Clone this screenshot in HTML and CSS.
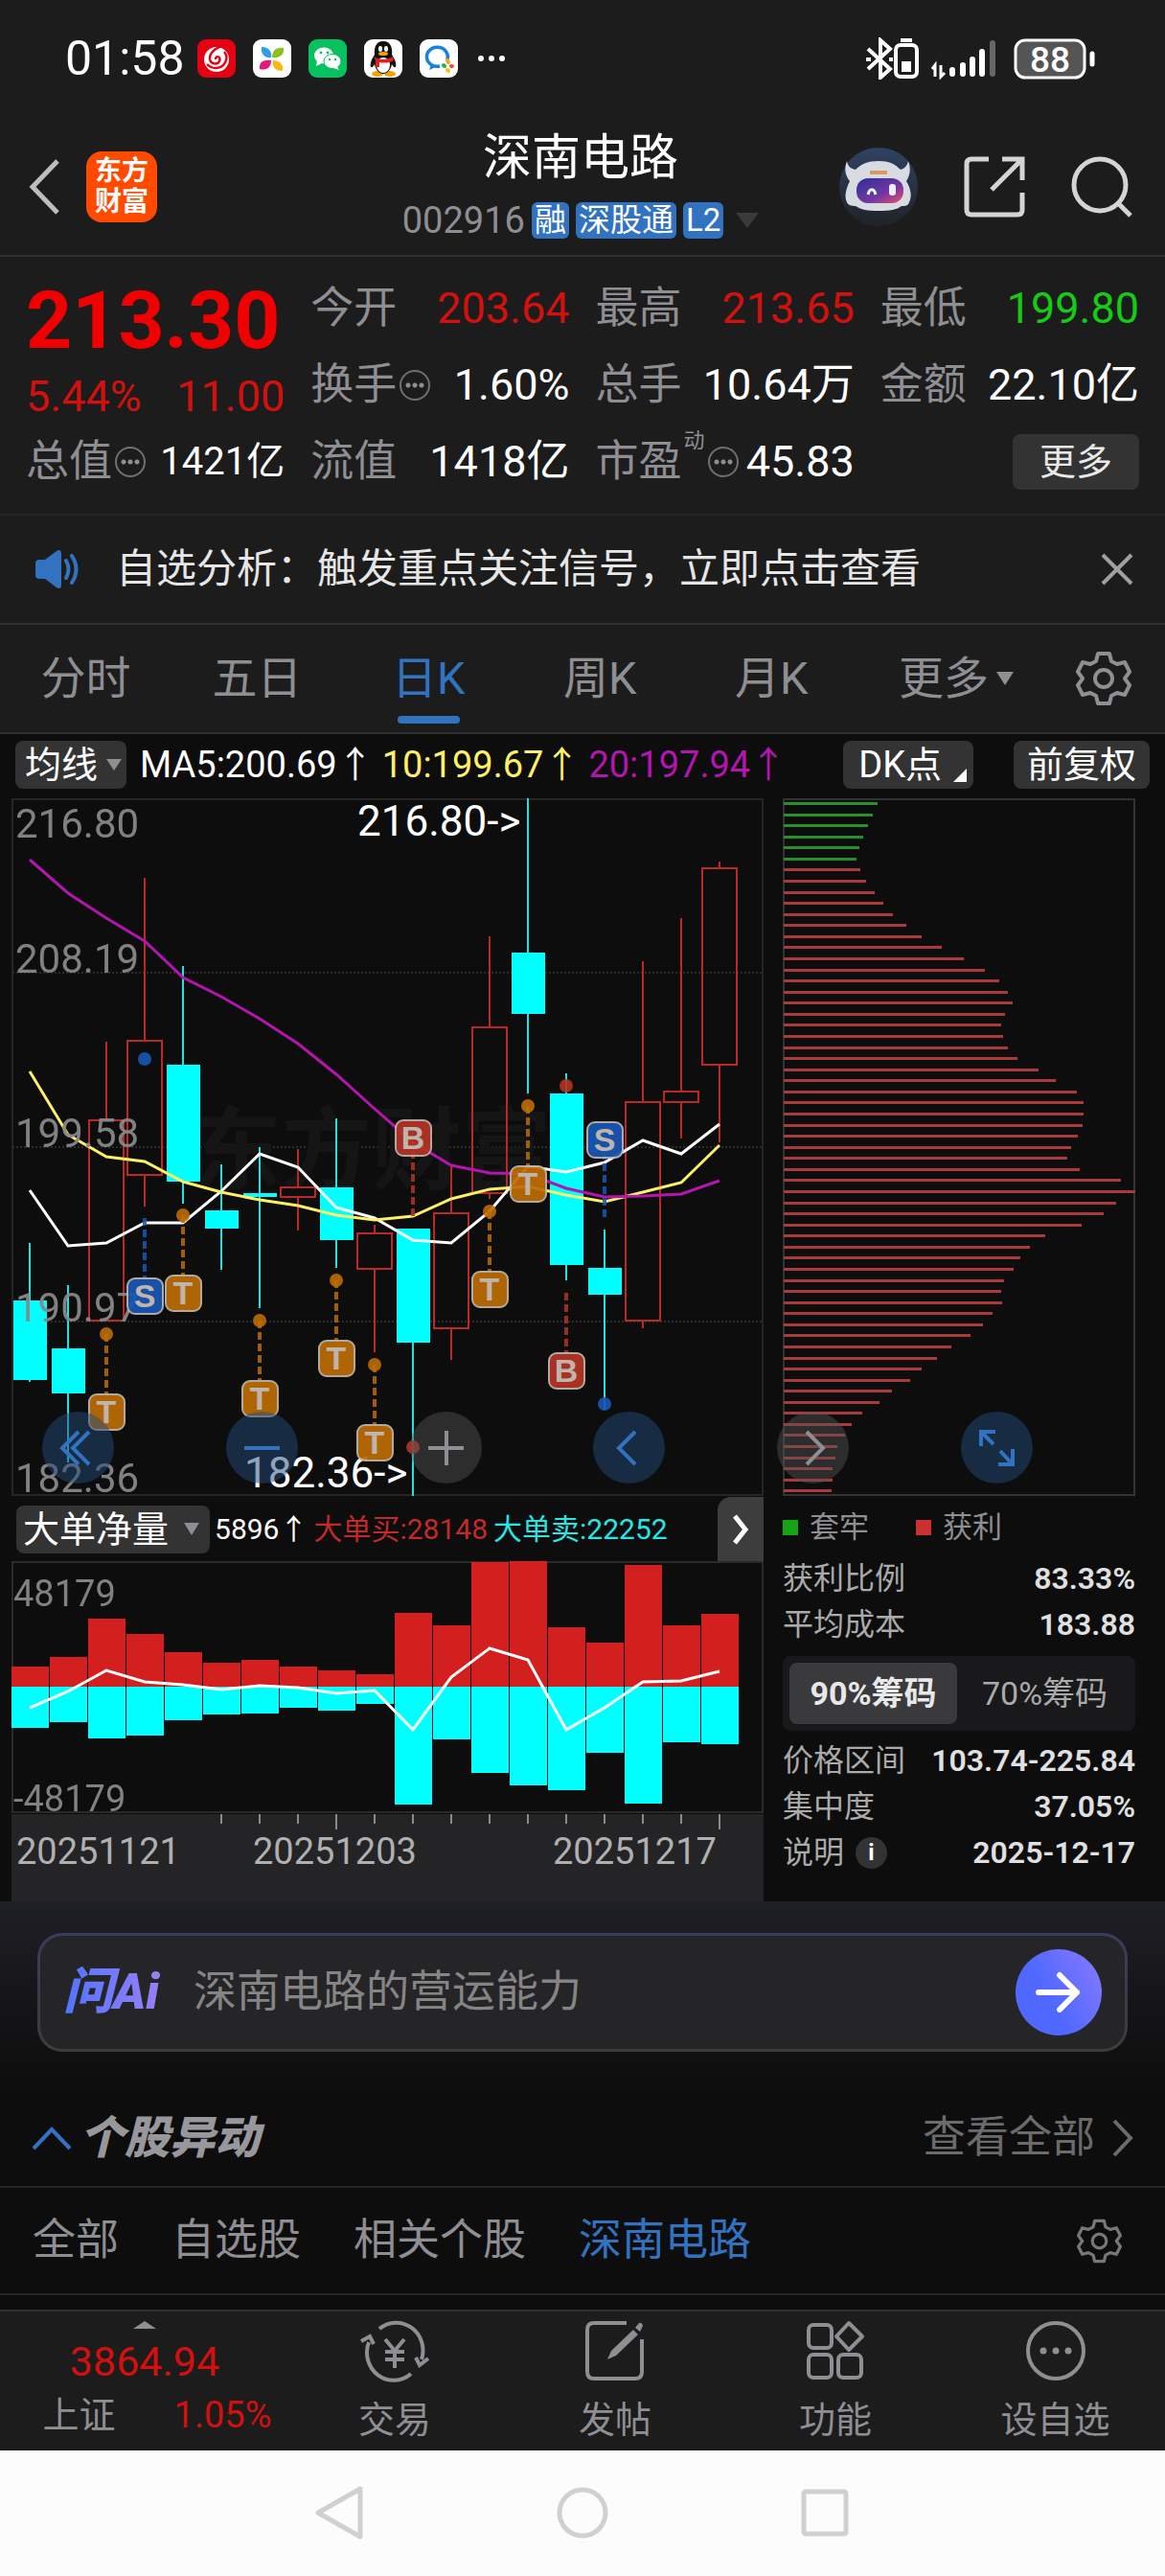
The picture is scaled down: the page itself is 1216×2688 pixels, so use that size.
FILE: index.html
```html
<!DOCTYPE html>
<html lang="zh-CN">
<head>
<meta charset="utf-8">
<meta name="viewport" content="width=device-width, initial-scale=1">
<title>深南电路 002916</title>
<link rel="stylesheet" href="styles.css">
</head>
<body>
<div class="status">
  <span class="clock">01:58</span>
  <div class="apps">
    <svg viewBox="0 0 40 40"><rect width="40" height="40" rx="9" fill="#e60012"/><circle cx="20" cy="21" r="13" fill="#fff"/><path d="M31 5C20 8 12 14 13 21c1 5 8 6 10 2 2-5-4-7-4-2M28 13c6 7 0 17-9 17-4 0-7-2-9-4" fill="none" stroke="#e60012" stroke-width="2.4"/></svg>
    <svg viewBox="0 0 40 40"><rect width="40" height="40" rx="9" fill="#fff"/><path d="M9 8c7 0 11 4 10 11C12 20 8 15 9 8z" fill="#2b9fe0"/><path d="M32 9c-8-1-12 3-12 10 8 1 13-3 12-10z" fill="#8cc21f"/><path d="M7 31c8 2 12-2 12-9-8-1-13 2-12 9z" fill="#e3197b"/><path d="M31 33c-8 0-11-4-10-11 7 0 11 4 10 11z" fill="#f9b90f"/></svg>
    <svg viewBox="0 0 40 40"><rect width="40" height="40" rx="9" fill="#07c160"/><ellipse cx="16" cy="17" rx="10" ry="8.500" fill="#fff"/><path d="M9 22l-1 6 6-3z" fill="#fff"/><ellipse cx="25" cy="23" rx="9" ry="7.500" fill="#fff" stroke="#07c160"/><path d="M30 28l2 4-6-2z" fill="#fff"/><g fill="#07c160"><circle cx="13" cy="14" r="1.400"/><circle cx="20" cy="14" r="1.400"/><circle cx="22" cy="21" r="1.200"/><circle cx="28" cy="21" r="1.200"/></g></svg>
    <svg viewBox="0 0 40 40"><rect width="40" height="40" rx="9" fill="#fff"/><ellipse cx="14" cy="36" rx="6" ry="3" fill="#f5a300"/><ellipse cx="27" cy="36" rx="6" ry="3" fill="#f5a300"/><path d="M20 2c-7 0-10 6-9 14-4 6-5 10-4 13 1 1 3-1 4-3 1 6 5 10 9 10s8-4 9-10c1 2 3 4 4 3 1-3 0-7-4-13 1-8-2-14-9-14z" fill="#111"/><ellipse cx="20" cy="27" rx="7" ry="8" fill="#fff"/><ellipse cx="17" cy="10" rx="2" ry="3" fill="#fff"/><ellipse cx="23" cy="10" rx="2" ry="3" fill="#fff"/><ellipse cx="20" cy="15" rx="5" ry="2" fill="#f5a300"/><path d="M10 18c6 4 14 4 20 0l1 4c-5 3-10 3-15 2v5h-4v-7z" fill="#e02020"/></svg>
    <svg viewBox="0 0 40 40"><rect width="40" height="40" rx="9" fill="#fff"/><path d="M29 21a11 10 0 1 0-8 7" fill="none" stroke="#1683e0" stroke-width="3.500"/><path d="M12 26l-2 6 7-3z" fill="#1683e0"/><g stroke-width="4" stroke-linecap="round"><path d="M29 22l1 2" stroke="#f6a21a"/><path d="M34 28h-1" stroke="#e8562a"/><path d="M29 32l1 1" stroke="#f6c11a"/><path d="M25 27l1 1" stroke="#2cab4f"/></g></svg>
  </div>
  <svg class="more-dots" viewBox="0 0 30 8"><g fill="#fff"><circle cx="4" cy="4" r="3"/><circle cx="15" cy="4" r="3"/><circle cx="26" cy="4" r="3"/></g></svg>
  <svg class="signals" viewBox="0 0 240 44"><g fill="none" stroke="#fff" stroke-width="4"><path d="M2 12l23 21-10 9V3l10 9L2 33M0 23h5M24 23h4"/><rect x="31" y="8" width="22" height="33" rx="5"/><path d="M36 3h12"/></g><rect x="37" y="25" width="10" height="11" fill="#fff"/><path d="M72 41V29l-3 4M78 29v12l4-4" fill="none" stroke="#fff" stroke-width="3"/><g stroke-width="6" stroke-linecap="round" stroke="#fff"><path d="M90 34v4M101 29v9M111 23v15M121 15v23"/><path d="M132 6v32" stroke="#666"/></g><rect x="156" y="3" width="72" height="39" rx="10" fill="#555" stroke="#fff" stroke-width="3"/><path d="M236 17v11" stroke="#fff" stroke-width="5" stroke-linecap="round"/><text x="192" y="36" class="battery-text">88</text></svg>
</div>

<header class="head">
  <div class="head-side">
    <button class="plain" aria-label="返回"><svg width="33" height="60" viewBox="0 0 33 60"><path d="M30 3L4 30l26 27" fill="none" stroke="#bdbdbd" stroke-width="5"/></svg></button>
    <a href="#" class="brand">东方<br>财富</a>
  </div>
  <div class="head-title">
    <h1>深南电路</h1>
    <p class="code"><span>002916</span><b>融</b><b>深股通</b><b>L2</b><svg width="24" height="16" viewBox="0 0 24 16"><path d="M0 0h24L12 16z" fill="#3a3a3a"/></svg></p>
  </div>
  <div class="head-side head-right">
    <button class="plain" aria-label="智能助手"><svg width="82" height="82" viewBox="0 0 82 82"><defs><linearGradient id="face" x1="0" x2="1" y2="1"><stop stop-color="#2d2f9c"/><stop offset=".6" stop-color="#7436a0"/><stop offset="1" stop-color="#e8506a"/></linearGradient><linearGradient id="halo" x2="0" y2="1"><stop stop-color="#2f4263"/><stop offset="1" stop-color="#202226"/></linearGradient></defs><circle cx="41" cy="41" r="41" fill="url(#halo)"/><path d="M8 14c1 6 4 8 9 9 6-6 13-9 24-9s17 3 23 9c4-1 7-4 8-9 3 8 2 15-2 21 5 8 6 16 3 22-1 4-4 4-8 4-5 4-12 5-24 5s-18-1-24-5c-4 0-8-1-9-4-3-6-1-14 3-22-5-6-6-13-3-21z" fill="#d9dbe2"/><rect x="18" y="32" width="49" height="26" rx="12" fill="url(#face)"/><path d="M30 49c2-7 6-7 8 0" fill="none" stroke="#dff" stroke-width="3"/><rect x="52" y="38" width="7" height="12" rx="3" fill="#eef"/><path d="M32 26h18" stroke="#d99a60" stroke-width="4"/></svg></button>
    <button class="plain" aria-label="分享"><svg width="64" height="64" viewBox="0 0 64 64"><path d="M26 3H8q-5 0-5 5v48q0 5 5 5h48q5 0 5-5V38M40 3h21v22M61 3L29 35" fill="none" stroke="#d4d4d4" stroke-width="5"/></svg></button>
    <button class="plain" aria-label="搜索"><svg width="64" height="64" viewBox="0 0 64 64"><circle cx="30" cy="30" r="27" fill="none" stroke="#d4d4d4" stroke-width="5"/><path d="M49 49l13 13" stroke="#d4d4d4" stroke-width="5"/></svg></button>
  </div>
</header>

<section class="quote">
  <div class="price"><strong>213.30</strong><div><span>5.44%</span><span>11.00</span></div></div>
  <div class="cell"><span>今开</span><em class="up">203.64</em></div>
  <div class="cell"><span>最高</span><em class="up">213.65</em></div>
  <div class="cell"><span>最低</span><em class="down">199.80</em></div>
  <div class="cell"><span>换手<i class="tip"></i></span><em>1.60%</em></div>
  <div class="cell"><span>总手</span><em>10.64万</em></div>
  <div class="cell"><span>金额</span><em>22.10亿</em></div>
  <div class="cell"><span>总值<i class="tip"></i></span><em class="small">1421亿</em></div>
  <div class="cell"><span>流值</span><em>1418亿</em></div>
  <div class="cell"><span>市盈<sup>动</sup><i class="tip"></i></span><em>45.83</em></div>
  <div class="cell end"><button class="chip">更多</button></div>
</section>

<section class="notice">
  <svg width="48" height="40" viewBox="0 0 48 40"><path d="M0 14q0-4 4-4h6L22 1q5-3 5 3v32q0 6-5 3L10 30H4q-4 0-4-4z" fill="#3173c1"/><path d="M32 11q5 9 0 18M38 6q9 14 0 28" fill="none" stroke="#3173c1" stroke-width="4" stroke-linecap="round"/></svg>
  <p>自选分析：触发重点关注信号，立即点击查看</p>
  <button class="plain" aria-label="关闭"><svg width="34" height="34" viewBox="0 0 34 34"><path d="M2 2l30 30M32 2L2 32" stroke="#a0a0a0" stroke-width="4"/></svg></button>
</section>

<nav class="periods">
  <button>分时</button><button>五日</button><button class="on">日K</button><button>周K</button><button>月K</button>
  <button class="drop">更多<svg width="18" height="14" viewBox="0 0 18 14"><path d="M0 0h18L9 14z" fill="#8e8e93"/></svg></button>
  <button class="gear" aria-label="设置"><svg width="58" height="58" viewBox="0 0 58 58"><g fill="none" stroke="#8e8e93" stroke-width="4"><path d="M23 3h12l2 8 6 3 8-2 5 10-5 7 5 7-5 10-8-2-6 3-2 8H23l-2-8-6-3-8 2-5-10 5-7-5-7 5-10 8 2 6-3z" stroke-linejoin="round"/><circle cx="29" cy="29" r="9"/></g></svg></button>
</nav>

<main>
  <div class="tools">
    <button class="chip tight">均线<svg width="16" height="12" viewBox="0 0 16 12"><path d="M0 0h16L8 12z" fill="#8e8e93"/></svg></button>
    <p class="ma"><span>MA5:200.69↑</span><span class="ma10">10:199.67↑</span><span class="ma20">20:197.94↑</span></p>
    <button class="chip dk">DK点<svg width="14" height="14" viewBox="0 0 14 14"><path d="M14 0v14H0z" fill="#fff"/></svg></button>
    <button class="chip">前复权</button>
  </div>

  <div class="charts upper">
    <svg class="chart" viewBox="12 831 785 729">
      <rect x="13" y="832" width="783" height="726" fill="none" stroke="#262626" stroke-width="2"/>
      <path d="M13 1013h783M13 1195h783M13 1377h783" stroke="#2c2c2c" stroke-width="2" stroke-dasharray="2 2"/>
      <text class="watermark" x="200" y="1232">东方财富</text>
      <g id="candles"></g>
      <g id="averages"></g>
      <g class="scale"><text x="16" y="872">216.80</text><text x="16" y="1013">208.19</text><text x="16" y="1195">199.58</text><text x="16" y="1377">190.97</text><text x="16" y="1555">182.36</text></g>
      <g class="peak"><text x="373" y="870">216.80-&gt;</text><text x="255" y="1550">182.36-&gt;</text></g>
      <g id="marks"></g>
    </svg>
    <svg class="chart" viewBox="817 831 368 729">
      <rect x="818" y="832" width="366" height="726" fill="none" stroke="#333" stroke-width="2"/>
      <g id="chips"></g>
    </svg>
    <div class="controls">
      <button aria-label="最早"><svg viewBox="0 0 75 75"><path d="M38 21L21 38l17 17M49 21L32 38l17 17"/></svg></button>
      <button aria-label="缩小"><svg viewBox="0 0 75 75"><path d="M19 38h37"/></svg></button>
      <button class="off" aria-label="放大"><svg viewBox="0 0 75 75"><path d="M19 38h37M38 20v36"/></svg></button>
      <button aria-label="向左"><svg viewBox="0 0 75 75"><path d="M44 21L27 38l17 17"/></svg></button>
      <button class="off" aria-label="向右"><svg viewBox="0 0 75 75"><path d="M31 21l17 17-17 17"/></svg></button>
      <button aria-label="全屏"><svg viewBox="0 0 75 75"><path d="M21 36V21h15M22 22l12 12M54 39v16H39M53 54L41 41"/></svg></button>
    </div>
  </div>

  <div class="charts">
    <div>
      <div class="tools sub">
        <button class="chip tight wide">大单净量<svg width="16" height="13" viewBox="0 0 16 13"><path d="M0 0h16L8 13z" fill="#8e8e93"/></svg></button>
        <p class="flow"><span>5896↑</span><span class="buy">大单买:28148</span><span class="sell">大单卖:22252</span></p>
        <button class="next" aria-label="下一个"><svg width="18" height="32" viewBox="0 0 18 32"><path d="M3 2l11 14L3 30" fill="none" stroke="#fff" stroke-width="5"/></svg></button>
      </div>
      <svg class="chart" viewBox="12 1627 785 355">
        <rect x="13" y="1628" width="783" height="261" fill="none" stroke="#2a2a2a" stroke-width="2"/>
        <g id="flow"></g>
        <g class="scale axis"><text x="14" y="1674">48179</text><text x="14" y="1888">-48179</text></g>
        <rect x="12" y="1891" width="785" height="91" fill="#242426"/>
        <path id="ticks" stroke="#8a8a8a" stroke-width="2"/>
        <g class="dates"><text x="17" y="1943">20251121</text><text x="264" y="1943">20251203</text><text x="577" y="1943">20251217</text></g>
      </svg>
    </div>
    <aside class="info">
      <p class="legend"><span><i class="g"></i>套牢</span><span><i class="r"></i>获利</span></p>
      <dl><dt>获利比例</dt><dd>83.33%</dd><dt>平均成本</dt><dd>183.88</dd></dl>
      <div class="seg"><button class="on">90%筹码</button><button>70%筹码</button></div>
      <dl><dt>价格区间</dt><dd>103.74-225.84</dd><dt>集中度</dt><dd>37.05%</dd><dt>说明<button class="i" aria-label="说明">i</button></dt><dd>2025-12-17</dd></dl>
    </aside>
  </div>

  <section class="ask">
    <form class="ask-box">
      <label class="ask-logo" for="ask">问Ai</label>
      <input id="ask" type="text" placeholder="深南电路的营运能力">
      <button type="button" aria-label="提问"><svg width="48" height="44" viewBox="0 0 48 44"><path d="M3 22h40M25 4l18 18-18 18" fill="none" stroke="#fff" stroke-width="6" stroke-linecap="round" stroke-linejoin="round"/></svg></button>
    </form>
  </section>

  <section class="moves">
    <svg width="42" height="26" viewBox="0 0 42 26"><path d="M2 24L21 4l19 20" fill="none" stroke="#3173c1" stroke-width="4"/></svg>
    <h2>个股异动</h2>
    <a href="#">查看全部<svg width="22" height="40" viewBox="0 0 22 40"><path d="M2 2l17 18L2 38" fill="none" stroke="#6b6b6b" stroke-width="4"/></svg></a>
  </section>
  <nav class="scope">
    <button>全部</button><button>自选股</button><button>相关个股</button><button class="on">深南电路</button>
    <button class="gear" aria-label="设置"><svg width="47" height="47" viewBox="0 0 58 58"><g fill="none" stroke="#77777b" stroke-width="4"><path d="M23 3h12l2 8 6 3 8-2 5 10-5 7 5 7-5 10-8-2-6 3-2 8H23l-2-8-6-3-8 2-5-10 5-7-5-7 5-10 8 2 6-3z" stroke-linejoin="round"/><circle cx="29" cy="29" r="9"/></g></svg></button>
  </nav>
</main>

<nav class="bottom">
  <a href="#" class="index"><svg width="24" height="8" viewBox="0 0 24 8"><path d="M12 0l12 8H0z" fill="#8e8e93"/></svg><strong>3864.94</strong><span>上证<em>1.05%</em></span></a>
  <a href="#"><svg viewBox="0 0 72 66"><g fill="none" stroke="#8e8e93" stroke-width="4"><path d="M20 10a28 29 0 0 1 44 32M53 57A28 29 0 0 1 9 24M1 23l9-5 4 8M71 41l-9 7-4-8M26 21l10 12 10-12M36 33v18M26 34h20M26 42h20"/></g></svg>交易</a>
  <a href="#"><svg viewBox="0 0 72 66"><g fill="none" stroke="#8e8e93" stroke-width="4"><path d="M48 4H14q-7 0-7 7v44q0 7 7 7h43q7 0 7-7V21"/></g><path d="M28 42l4-9 23-22 5 5-23 22zM57 9l4-5q3-1 4 3l-3 6z" fill="#8e8e93"/></svg>发帖</a>
  <a href="#"><svg viewBox="0 0 72 66"><g fill="none" stroke="#8e8e93" stroke-width="4"><rect x="8" y="6" width="24" height="24" rx="5"/><rect x="8" y="37" width="24" height="24" rx="5"/><rect x="39" y="37" width="24" height="24" rx="5"/><path d="M50 4l14 14-14 14-13-14z" stroke-linejoin="round"/></g></svg>功能</a>
  <a href="#"><svg viewBox="0 0 72 66"><circle cx="36" cy="33" r="29" fill="none" stroke="#8e8e93" stroke-width="4"/><g fill="#8e8e93"><circle cx="23" cy="33" r="3.500"/><circle cx="36" cy="33" r="3.500"/><circle cx="49" cy="33" r="3.500"/></g></svg>设自选</a>
</nav>

<div class="system">
  <button class="plain" aria-label="返回"><svg width="54" height="58" viewBox="0 0 54 58"><path d="M48 4v50L4 29z" fill="none" stroke="#d0d0d0" stroke-width="5" stroke-linejoin="round"/></svg></button>
  <button class="plain" aria-label="主页"><svg width="54" height="58" viewBox="0 0 54 58"><circle cx="27" cy="29" r="24" fill="none" stroke="#d0d0d0" stroke-width="5"/></svg></button>
  <button class="plain" aria-label="多任务"><svg width="54" height="58" viewBox="0 0 54 58"><rect x="5" y="7" width="44" height="44" rx="2" fill="none" stroke="#d0d0d0" stroke-width="5"/></svg></button>
</div>
<script src="script.js"></script>
</body>
</html>
```
FILE: styles.css
```css
* { box-sizing: border-box; }
body { margin: 0; background: #fcfcfc; color: #fff; font-family: Roboto, "Noto Sans CJK SC", sans-serif; }
p, h1, h2, dl, dd { margin: 0; font-weight: 400; }
em, i { font-style: normal; }
button, input { font: inherit; color: inherit; border: 0; padding: 0; background: none; }
a { color: inherit; text-decoration: none; }
svg { flex: none; display: block; }
.plain { display: block; }

.status { display: flex; align-items: center; padding: 38px 72px 16px 68px; background: #1c1c1c; font-size: 50px; line-height: 46px; }
.clock { width: 138px; }
.apps { display: flex; gap: 18px; }
.apps svg { width: 40px; height: 40px; }
.more-dots { width: 30px; margin-left: 20px; }
.signals { width: 240px; margin-left: auto; }
.battery-text { font-size: 37px; font-weight: 500; fill: #fff; text-anchor: middle; font-family: Roboto, sans-serif; }

.head { display: grid; grid-template-columns: 1fr auto 1fr; align-items: center; padding: 35px 34px 12px 30px; background: #1c1c1c; border-bottom: 2px solid #303030; }
.head-side { display: flex; align-items: center; gap: 27px; }
.head-right { justify-content: flex-end; gap: 48px; }
.brand { width: 74px; padding: 5px 0; border-radius: 16px; background: #ff4a00; font-size: 28px; font-weight: 700; line-height: 32px; text-align: center; }
.head-title { text-align: center; }
.head-title h1 { font-size: 51px; line-height: 60px; }
.code { display: flex; align-items: center; justify-content: center; gap: 7px; padding-top: 11px; color: #8e8e93; font-size: 38px; line-height: 48px; }
.code b { padding: 0 3px; border-radius: 6px; background: #3173c1; color: #fff; font-size: 33px; font-weight: 400; line-height: 38px; }
.code svg { margin-left: 6px; }

.quote { display: grid; grid-template-columns: repeat(4, 1fr); column-gap: 27px; padding: 14px 27px 14px; background: #1c1c1c; border-bottom: 2px solid #262626; font-size: 45px; line-height: 80px; }
.price { display: flex; flex-direction: column; gap: 6px; grid-row: span 2; padding-top: 8px; color: #d2110f; font-size: 45px; line-height: 56px; }
.price strong { color: #f00000; font-size: 84px; line-height: 90px; }
.price div { display: flex; justify-content: space-between; }
.cell { display: flex; align-items: center; justify-content: space-between; }
.cell span { display: flex; align-items: center; color: #8e8e93; }
.cell em { color: #fff; }
.cell .up { color: #d2110f; }
.cell .down { color: #14cc14; }
.cell .small { font-size: 40px; }
.cell sup { align-self: flex-start; margin-left: 2px; font-size: 22px; line-height: 36px; }
.cell.end { justify-content: flex-end; }
.tip { width: 32px; height: 32px; margin-left: 3px; border: 2px solid #707074; border-radius: 50%; background: radial-gradient(circle, #8e8e93 2px, transparent 3px) center / 8px 8px no-repeat, radial-gradient(circle, #8e8e93 2px, transparent 3px) 3px 10px / 8px 8px no-repeat, radial-gradient(circle, #8e8e93 2px, transparent 3px) 17px 10px / 8px 8px no-repeat; }
.chip { display: flex; align-items: center; justify-content: center; padding: 0 14px; border-radius: 8px; background: #333; color: #fff; font-size: 38px; line-height: 50px; }
.cell .chip { padding: 0 28px; line-height: 58px; color: #e8e8e8; }

.notice { display: flex; align-items: center; padding: 0 33px 0 37px; background: #1c1c1c; border-bottom: 2px solid #303030; color: #e6e6e6; font-size: 42px; line-height: 112px; }
.notice p { flex: 1; padding-left: 36px; }

.periods { display: flex; background: #1c1c1c; border-bottom: 2px solid #303030; color: #8e8e93; font-size: 47px; line-height: 112px; }
.periods button { position: relative; display: flex; flex: 181; align-items: center; justify-content: center; gap: 8px; }
.periods .drop { padding-left: 14px; }
.periods .gear { flex: 130; }
.periods .on { color: #3173c1; }
.periods .on::after { content: ""; position: absolute; bottom: 9px; width: 65px; height: 8px; border-radius: 4px; background: #3173c1; }

main { padding-bottom: 15px; background: #0d0d0d; }
.tools { display: flex; align-items: center; padding: 7px 16px 10px; font-size: 38px; line-height: 50px; }
.tools .tight { padding: 0 5px 0 10px; gap: 9px; }
.tools .wide { padding: 0 11px 0 7px; gap: 16px; }
.tools .dk { position: relative; padding: 0 33px 0 16px; margin-right: 42px; }
.dk svg { position: absolute; right: 7px; bottom: 7px; }
.ma { display: flex; flex: 1; gap: 9px; padding-left: 14px; white-space: nowrap; }
.ma10 { color: #fff066; }
.ma20 { color: #b415ae; }
.charts { position: relative; display: grid; grid-template-columns: 785fr 368fr; column-gap: 20px; align-items: start; padding: 0 31px 0 12px; }
.chart { width: 100%; height: auto; }
.scale { fill: #888; font-size: 42px; opacity: .95; }
.axis { font-size: 38px; }
.dates { fill: #b0b0b0; font-size: 38px; }
.peak { fill: #fff; font-size: 44px; }
.watermark { fill: #151515; font-size: 94px; font-weight: 700; }
.mark-letter { font-size: 34px; font-weight: 700; text-anchor: middle; font-family: "Liberation Sans", sans-serif; fill: #bfb5ad; }
.controls { position: absolute; left: 44px; right: 138px; bottom: 14px; display: flex; justify-content: space-between; }
.controls button { width: 75px; height: 75px; border-radius: 50%; background: rgba(33, 73, 122, .5); color: #3173c1; }
.controls .off { background: rgba(85, 85, 85, .45); color: #8e8e93; }
.controls path { fill: none; stroke: currentColor; stroke-width: 4; }

.sub { padding: 0 0 0 5px; }
.flow { display: flex; flex: 1; gap: 6px; padding-left: 5px; font-size: 30px; white-space: nowrap; }
.buy { color: #c22a28; }
.sell { color: #26e6e6; }
.sub .next { display: flex; align-items: center; justify-content: center; width: 48px; height: 67px; border-radius: 14px 0 0 0; background: #3d3d3d; }
.info { padding-top: 8px; font-size: 32px; line-height: 48px; }
.legend { display: flex; gap: 49px; padding-bottom: 5px; color: #8e8e93; font-size: 31px; }
.legend span { display: flex; align-items: center; gap: 12px; }
.legend i { width: 16px; height: 16px; }
.legend .g { background: #14a514; }
.legend .r { background: #cc3030; }
.info dl { display: grid; grid-template-columns: auto auto; justify-content: space-between; }
.info dt { display: flex; align-items: center; gap: 12px; color: #aaa; }
.info dd { color: #e0e0e0; font-weight: 600; text-align: right; }
.info .i { width: 33px; height: 33px; border-radius: 50%; background: #333; color: #fff; font-size: 24px; font-weight: 700; line-height: 33px; }
.seg { display: flex; gap: 4px; margin: 9px 0 7px; padding: 7px; border-radius: 8px; background: #19191b; color: #aaa; font-size: 34px; line-height: 64px; }
.seg button { flex: 1; border-radius: 8px; }
.seg .on { background: #3a3a3c; color: #e8e8e8; font-weight: 700; }

.ask { padding: 33px 39px 40px; background: linear-gradient(#1f1f26, #0d0d0d); }
.ask-box { display: flex; align-items: center; padding: 14px 24px; border: 3px solid transparent; border-radius: 26px; background: linear-gradient(#252527, #252527) padding-box, linear-gradient(#3a3c5e, #3f3b3b) border-box; }
.ask-logo { width: 136px; background: linear-gradient(90deg, #4f74ff, #9c80f5 106px); background-clip: text; -webkit-background-clip: text; color: transparent; font-size: 52px; font-weight: 900; font-style: italic; line-height: 60px; }
.ask-box input { flex: 1; min-width: 0; font-size: 45px; line-height: 60px; }
.ask-box input::placeholder { color: #858585; opacity: 1; }
.ask-box button { display: flex; align-items: center; justify-content: center; width: 90px; height: 90px; border-radius: 50%; background: linear-gradient(60deg, #5068ff 40%, #8a7aff); }
.moves { display: flex; align-items: center; padding: 0 33px; border-bottom: 2px solid #262626; font-size: 45px; line-height: 100px; }
.moves h2 { flex: 1; padding-left: 8px; color: #98989c; font-size: 47px; font-weight: 900; font-style: italic; }
.moves a { display: flex; align-items: center; gap: 18px; color: #6b6b6b; }
.scope { display: flex; gap: 55px; padding: 0 45px 0 34px; border-bottom: 2px solid #262626; color: #8e8e93; font-size: 45px; line-height: 110px; }
.scope .on { color: #3173c1; }
.scope .gear { margin-left: auto; }

.bottom { display: grid; grid-template-columns: 297fr 230fr 230fr 230fr 229fr; padding-bottom: 4px; border-top: 2px solid #303030; background: #1c1c1c; color: #8e8e93; font-size: 38px; }
.bottom a { display: flex; flex-direction: column; align-items: center; gap: 11px; padding-top: 8px; line-height: 56px; }
.bottom a svg { width: 72px; height: 66px; }
.bottom .index { gap: 0; padding: 10px 0 0 5px; }
.bottom .index svg { width: 24px; height: 8px; }
.index strong { padding-top: 6px; color: #d2110f; font-size: 43px; font-weight: 400; line-height: 56px; }
.index span { display: flex; gap: 61px; padding-left: 26px; }
.index em { color: #d2110f; }
.system { display: flex; justify-content: center; gap: 199px; padding: 36px 0; background: #fcfcfc; }
```
FILE: script.js
```js
// Charts share one horizontal scale: the first day sits at x 31 and each day takes 40 units.
const NS = 'http://www.w3.org/2000/svg';
const at = i => 31 + 40 * i;
function add(parent, tag, attrs, text) {
  const el = document.createElementNS(NS, tag);
  for (const k in attrs) el.setAttribute(k, attrs[k]);
  if (text) el.textContent = text;
  document.getElementById(parent).appendChild(el);
}

// rising?, high, body top, body bottom, low
const days = [
  [0,1295,1355,1438,1440],[0,1339,1405,1452,1524],[1,1085,1167,1376,1376],[1,914,1084,1224,1257],
  [0,1006,1109,1231,1254],[0,1213,1261,1280,1323],[0,1195,1243,1247,1363],[1,1197,1237,1247,1282],
  [0,1165,1237,1292,1321],[1,1276,1285,1322,1409],[0,1280,1280,1399,1559],[1,1213,1264,1384,1417],
  [1,975,1070,1243,1249],[0,831,992,1056,1139],[0,1118,1139,1318,1334],[0,1281,1321,1349,1469],
  [1,1001,1148,1376,1384],[1,956,1137,1148,1186],[1,897,904,1109,1190]
];
days.forEach(([up, high, top, bottom, low], i) => {
  const x = at(i), color = up ? '#ba2926' : '#26e0e0';
  add('candles', 'path', { d: `M${x} ${high}V${top}M${x} ${bottom}V${low}`, stroke: color, 'stroke-width': 2 });
  if (up) add('candles', 'rect', { x: x - 18, y: top, width: 36, height: bottom - top, fill: 'none', stroke: color, 'stroke-width': 2 });
  else add('candles', 'rect', { x: x - 17, y: top, width: 35, height: bottom - top, fill: '#00ffff' });
});

const line = (parent, ys, color, width) =>
  add(parent, 'polyline', { points: ys.map((y, i) => `${at(i)},${y}`).join(' '), fill: 'none', stroke: color, 'stroke-width': width });
line('averages', [1240,1298,1295,1274,1274,1241,1202,1216,1258,1269,1292,1295,1262,1215,1221,1211,1188,1202,1171], '#fff', 3);
line('averages', [1116,1182,1205,1210,1231,1242,1250,1256,1266,1271,1267,1249,1239,1236,1245,1252,1242,1232,1193], '#fff066', 3);
line('averages', [895,930,956,980,1018,1038,1061,1087,1119,1155,1190,1214,1222,1223,1238,1247,1246,1244,1230], '#b415ae', 3);

// letter, day, badge centre, dot centre, dashed line from and to
const tones = { T: '#bd6c04', S: '#1857b5', B: '#b53324' };
[
  ['T',2,1471,1390,1390,1453],['S',3,1350,1103,1269,1332],['T',4,1347,1266,1266,1329],['T',6,1457,1376,1376,1438],
  ['T',8,1415,1334,1334,1397],['T',9,1503,1422,1422,1485],['B',10,1185,1508,1199,1267],['T',12,1343,1262,1262,1325],
  ['T',13,1233,1152,1152,1215],['B',14,1428,1131,1347,1410],['S',15,1187,1463,1200,1268]
].forEach(([letter, i, y, dot, from, to]) => {
  const x = at(i), color = tones[letter];
  add('marks', 'path', { d: `M${x} ${from}V${to}`, stroke: color, 'stroke-width': 4, 'stroke-dasharray': '8 4', opacity: .85 });
  add('marks', 'circle', { cx: x, cy: dot, r: 7, fill: color, opacity: .9 });
  add('marks', 'rect', { x: x - 18, y: y - 18, width: 37, height: 37, rx: 8, fill: color, stroke: '#bfb5ad', 'stroke-width': 2, opacity: .93 });
  add('marks', 'text', { x, y: y + 12, class: 'mark-letter' }, letter);
});

// Holdings by price level, from the highest price down; the first six are held at a loss.
const held = [98,93,88,83,79,76,80,86,95,104,114,128,144,165,188,210,225,234,239,231,227,229,234,244,266,284,306,313,313,312,307,
  300,296,309,352,367,347,334,311,273,257,247,240,230,227,228,218,208,195,175,160,144,132,113,100,82,71,64,56,54,51,51,50];
held.forEach((w, i) => add('chips', 'rect', { x: 818, y: Math.round(835 + i * 11.57), width: w, height: 3, fill: i < 6 ? '#279027' : '#ab3a3a' }));

const buys = [1737,1727,1687,1703,1722,1733,1730,1737,1741,1745,1681,1694,1628,1627,1696,1712,1631,1694,1682];
const sells = [1801,1795,1812,1809,1793,1787,1786,1780,1783,1776,1881,1813,1848,1861,1866,1827,1880,1816,1818];
buys.forEach((y, i) => {
  add('flow', 'rect', { x: 12 + 40 * i, y, width: 39, height: 1758 - y, fill: '#d41f1f' });
  add('flow', 'rect', { x: 12 + 40 * i, y: 1758, width: 39, height: sells[i] - 1758, fill: '#00ffff' });
});
line('flow', [1780,1763,1741,1753,1756,1761,1757,1759,1765,1762,1803,1748,1718,1730,1803,1780,1753,1752,1742], '#fff', 3);
document.getElementById('ticks').setAttribute('d',
  Array.from({ length: 14 }, (_, k) => `M${231 + 40 * k} 1891v${k === 3 || k === 13 ? 16 : 10}`).join(''));
```
